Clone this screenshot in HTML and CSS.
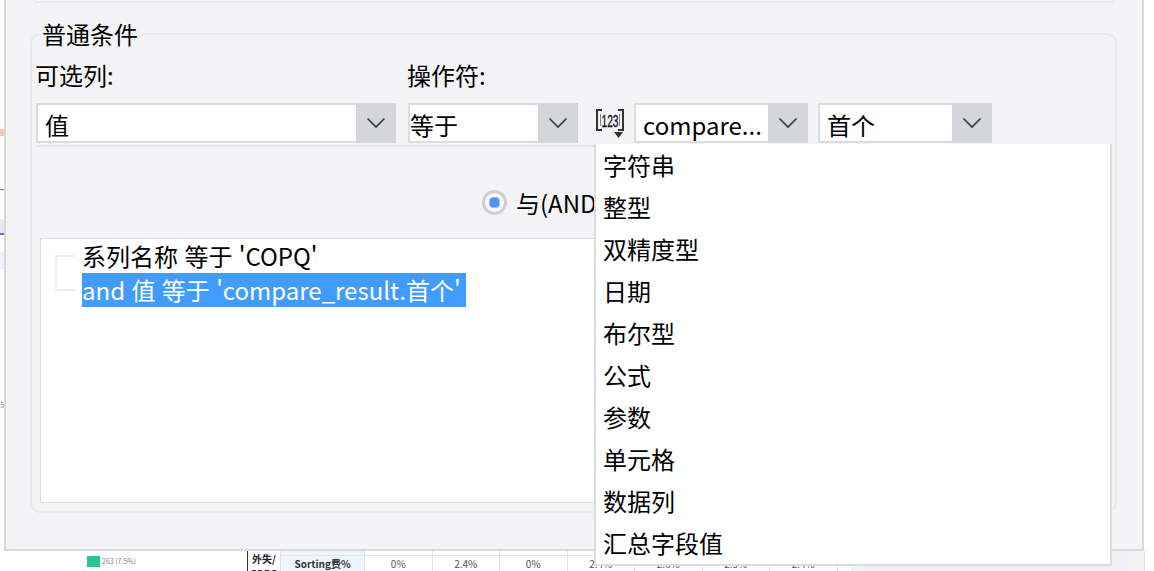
FILE: index.html
```html
<!DOCTYPE html>
<html lang="zh">
<head>
<meta charset="utf-8">
<title>普通条件</title>
<link rel="stylesheet" href="styles.css">
</head>
<body>
<div class="page">
  <div class="backdrop-marks">
    <span class="mark mark-orange"></span>
    <span class="mark mark-dark"></span>
    <span class="mark mark-lilac"></span>
    <span class="mark mark-blue"></span>
    <span class="mark mark-pale"></span>
    <span class="mark mark-s">5</span>
  </div>
  <main class="dialog">
    <div class="upper-panel"></div>
    <fieldset class="group">
      <legend class="group-title">普通条件</legend>
      <div class="labels">
        <span class="label label-col">可选列:</span>
        <span class="label">操作符:</span>
      </div>
      <div class="selects">
        <div class="select s-col"><span class="value">值</span><span class="arrow"><svg viewBox="0 0 20 12" class="chev"><path d="M1.500 1.500 10 10l8.500-8.500"/></svg></span></div>
        <div class="select s-op"><span class="value tight">等于</span><span class="arrow"><svg viewBox="0 0 20 12" class="chev"><path d="M1.500 1.500 10 10l8.500-8.500"/></svg></span></div>
        <svg class="type-icon" viewBox="0 0 28 30">
          <path class="bracket" d="M6 1H1V21H6M22 1H27V21H22"/>
          <path class="bracket-inner" d="M4.500 5V17M23.500 5V17"/>
          <text class="type-digits" x="5.500" y="18" textLength="17" lengthAdjust="spacingAndGlyphs">123</text>
          <path class="caret" d="M18 23H27L22.500 29z"/>
        </svg>
        <div class="select s-val"><span class="value">compare...</span><span class="arrow"><svg viewBox="0 0 20 12" class="chev"><path d="M1.500 1.500 10 10l8.500-8.500"/></svg></span></div>
        <div class="select s-pos"><span class="value">首个</span><span class="arrow"><svg viewBox="0 0 20 12" class="chev"><path d="M1.500 1.500 10 10l8.500-8.500"/></svg></span></div>
      </div>
      <div class="rule"></div>
      <div class="logic">
        <span class="radio"><span class="radio-dot"></span></span>
        <span class="logic-text">与(AND)</span>
      </div>
      <div class="listbox">
        <span class="tree-box"></span>
        <div class="lines">
          <div class="line">系列名称 等于 'COPQ'</div>
          <div class="line selected">and 值 等于 'compare_result.首个'</div>
        </div>
      </div>
    </fieldset>
    <ul class="menu">
      <li>字符串</li>
      <li>整型</li>
      <li>双精度型</li>
      <li>日期</li>
      <li>布尔型</li>
      <li>公式</li>
      <li>参数</li>
      <li>单元格</li>
      <li>数据列</li>
      <li>汇总字段值</li>
    </ul>
  </main>
  <div class="behind">
    <div class="legend-cell"><span class="swatch"></span><span class="legend-text">263 (7.5%)</span></div>
    <div class="head">外失/<br>COPQ</div>
    <div class="cell metric">Sorting费%</div>
    <div class="cell">0%</div>
    <div class="cell">2.4%</div>
    <div class="cell">0%</div>
    <div class="cell">2.4%</div>
    <div class="cell">2.6%</div>
    <div class="cell">2.5%</div>
    <div class="cell">2.4%</div>
    <div class="tail"></div>
    <div class="tail-blue"></div>
    <div class="tail-pale"></div>
    <div class="tail-gray"></div>
    <div class="tail-edge"></div>
  </div>
</div>
</body>
</html>
```
FILE: styles.css
```css
* { box-sizing: border-box; }
html, body { margin: 0; padding: 0; }
body {
  width: 1154px;
  height: 571px;
  overflow: hidden;
  background: #fff;
  color: #000;
  font-family: "Noto Sans CJK SC", "Noto Sans", sans-serif;
}
.page { position: relative; width: 1154px; height: 571px; overflow: hidden; }

.backdrop-marks { position: absolute; left: 0; top: 0; width: 4px; height: 551px; }
.mark { position: absolute; left: 0; width: 4px; }
.mark-orange { top: 129px; height: 7px; background: #f9c9b0; }
.mark-dark { top: 189px; height: 1px; background: #777; }
.mark-lilac { top: 219px; height: 16px; background: #e8e9f8; }
.mark-blue { top: 233px; height: 2px; background: #5a6ae8; }
.mark-pale { top: 252px; height: 17px; background: #edf3fd; }
.mark-s { top: 400px; font-size: 8px; line-height: 10px; color: #999; }

.dialog {
  position: relative;
  margin-left: 4px;
  width: 1140px;
  height: 551px;
  background: #f4f4f6;
  border-left: 2px solid #d9d9db;
  border-right: 2px solid #d9d9db;
  border-bottom: 2px solid #d9d9db;
  padding: 0 24px;
}
.upper-panel {
  height: 3px;
  margin: 0 3px;
  border: 1px solid #e9e9eb;
  border-width: 0 2px 2px 2px;
  border-radius: 0 0 8px 8px;
}

.group {
  margin: 13px 0 0;
  padding: 0 0 0 4px;
  width: 1087px;
  height: 497px;
  border: 2px solid #e9e9eb;
  border-radius: 10px;
  min-width: 0;
}
.group-title {
  margin-left: 4px;
  padding: 0 4px 0 2px;
  font-size: 24px;
  line-height: 35px;
  height: 35px;
}

.labels { display: flex; height: 35px; margin: 6px 0 0 -1px; align-items: center; }
.label { font-size: 24px; line-height: 35px; }
.label-col { width: 372px; }

.selects { display: flex; align-items: flex-start; height: 40px; margin-top: 11px; }
.select {
  display: flex;
  height: 40px;
  background: #fff;
  border: 2px solid #dcdcde;
  border-right: 0;
  font-size: 24px;
}
.value { flex: 1; line-height: 39px; padding-left: 7px; white-space: nowrap; overflow: hidden; }
.tight { padding-left: 0; }
.arrow {
  width: 40px;
  margin: -2px 0;
  display: flex;
  align-items: center;
  justify-content: center;
  background: #d5d6d9;
}
.chev { width: 20px; height: 12px; display: block; }
.chev path { fill: none; stroke: #3a3a3c; stroke-width: 1.600; }
.s-col { width: 360px; margin-right: 12px; }
.s-op { width: 170px; margin-right: 18px; }
.s-val { width: 174px; margin-right: 10px; }
.s-pos { width: 174px; }
.type-icon { width: 28px; height: 30px; margin: 6px 10px 0 0; display: block; overflow: visible; }
.bracket { fill: none; stroke: #333; stroke-width: 2; }
.bracket-inner { fill: none; stroke: #888; stroke-width: 1; }
.caret { fill: #333; }
.type-digits { font-family: "Liberation Sans", sans-serif; font-size: 16px; fill: #111; stroke: #111; stroke-width: 0.300; }

.rule { height: 2px; margin-top: 2px; background: #e6e6e8; width: 1076px; }
.logic { display: flex; align-items: center; height: 36px; margin: 38px 0 0 446px; }
.radio {
  width: 25px;
  height: 25px;
  margin-top: -2px;
  border-radius: 50%;
  background: #f8f8fa;
  border: 3px solid #cfcfd1;
  display: flex;
  align-items: center;
  justify-content: center;
  margin-right: 9px;
}
.radio-dot { width: 11px; height: 11px; border-radius: 4px; background: #4d93f6; border: 1px solid #8fbcf8; }
.logic-text { font-size: 24px; line-height: 36px; }

.listbox {
  position: relative;
  margin: 17px 0 0 4px;
  width: 1060px;
  height: 265px;
  background: #fff;
  border: 1px solid #dcdcde;
  padding: 0 0 0 41px;
}
.tree-box {
  position: absolute;
  left: 14px;
  top: 16px;
  width: 21px;
  height: 36px;
  border: 2px solid #eeeeee;
  border-right: 0;
}
.line {
  font-size: 24px;
  line-height: 34px;
  width: max-content;
  white-space: pre;
  word-spacing: 1px;
}
.selected {
  background: #429cfc;
  color: #fff;
  padding-right: 5px;
}

.menu {
  position: absolute;
  left: 588px;
  top: 144px;
  width: 518px;
  height: 422px;
  margin: 0;
  padding: 0 0 0 7px;
  list-style: none;
  background: #fff;
  border: 2px solid #dcdcde;
  border-top: 0;
}
.menu li {
  font-size: 24px;
  height: 42px;
  line-height: 41px;
}

.behind {
  display: flex;
  height: 20px;
  font-size: 10px;
  color: #555;
}
.legend-cell { width: 247px; display: flex; padding: 5px 0 0 87px; }
.swatch { width: 13px; height: 11px; background: #27c795; margin-right: 2px; }
.legend-text { font-size: 7px; line-height: 11px; color: #888; white-space: nowrap; }
.head {
  width: 34px;
  border-left: 1px solid #333;
  border-right: 1px solid #d8e2ee;
  text-align: center;
  font-size: 10px;
  font-weight: 700;
  color: #222;
  line-height: 15px;
  overflow: hidden;
  white-space: nowrap;
}
.cell {
  width: 67.500px;
  border-right: 1px solid #e4e4e4;
  text-align: center;
  line-height: 26px;
  overflow: hidden;
  white-space: nowrap;
  background: linear-gradient(to bottom, transparent 4px, #e4e4e4 4px, #e4e4e4 5px, transparent 5px);
}
.metric {
  width: 84px;
  background: linear-gradient(to bottom, #eef5fc 4px, #dfe6ee 4px, #dfe6ee 5px, #eef5fc 5px);
  font-weight: 700;
  color: #333;
}
.tail { width: 13px; }
.tail-blue { width: 14px; background: #edf3fd; }
.tail-pale { width: 262px; background: #f0f1f6; }
.tail-gray { width: 17px; background: #f3f3f6; }
.tail-edge { width: 1px; background: #dddddf; }
```
